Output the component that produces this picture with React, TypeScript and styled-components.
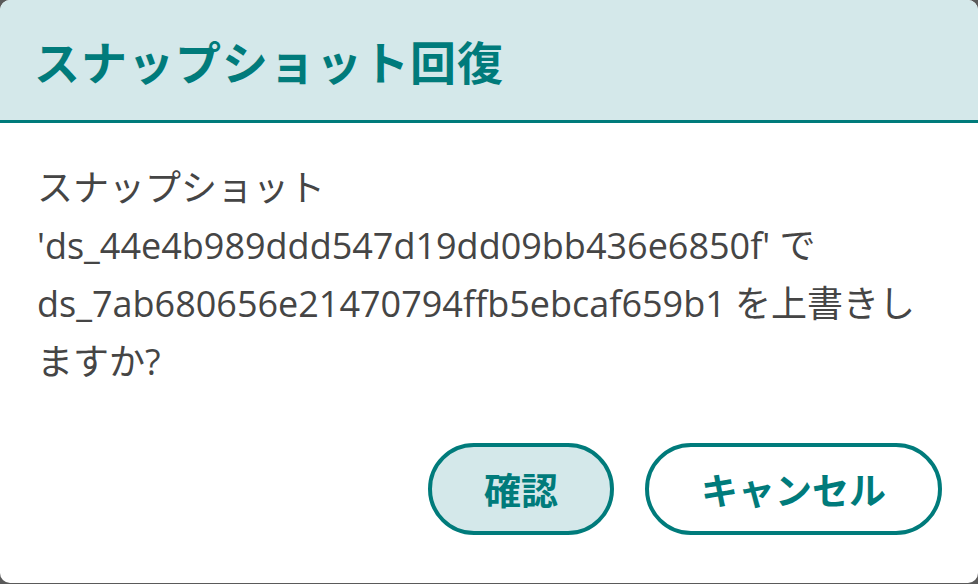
import React from "react";
import styled, { createGlobalStyle } from "styled-components";

const teal = "#007b7b";
const tint = "#d4e8ea";

const GlobalStyle = createGlobalStyle`
  html, body {
    margin: 0;
    padding: 0;
    background: #5a5a5a;
  }
  body {
    font-family: "Open Sans", "Noto Sans CJK JP", sans-serif;
  }
`;

const Dialog = styled.div`
  width: 978px;
  height: 583px;
  box-sizing: border-box;
  background: #ffffff;
  border-radius: 10px;
  overflow: hidden;
  display: flex;
  flex-direction: column;
`;

const Header = styled.header`
  height: 123px;
  flex: none;
  box-sizing: border-box;
  background: ${tint};
  border-bottom: 3px solid ${teal};
  display: flex;
  align-items: center;
  padding: 0 34px;
`;

const Title = styled.h2`
  margin: 0;
  font-family: "Noto Sans CJK JP", sans-serif;
  font-size: 46px;
  font-weight: 700;
  color: ${teal};
  letter-spacing: 1px;
`;

const Body = styled.div`
  padding: 36px 36px 0 37px;
  font-size: 36px;
  line-height: 58px;
  color: #454545;
`;

const Line = styled.div`
  white-space: nowrap;
`;

const Footer = styled.footer`
  margin-top: auto;
  display: flex;
  justify-content: flex-end;
  gap: 31px;
  padding: 0 36px 48px;
`;

const Button = styled.button<{ $primary?: boolean }>`
  height: 92px;
  box-sizing: border-box;
  padding: 0 52px;
  border: 4px solid ${teal};
  border-radius: 46px;
  background: ${(p) => (p.$primary ? tint : "#ffffff")};
  color: ${teal};
  font-family: "Noto Sans CJK JP", sans-serif;
  font-size: 37px;
  font-weight: 700;
  cursor: pointer;
`;

export default function App() {
  return (
    <>
      <GlobalStyle />
      <Dialog>
        <Header>
          <Title>スナップショット回復</Title>
        </Header>
        <Body>
          <Line>スナップショット</Line>
          <Line>'ds_44e4b989ddd547d19dd09bb436e6850f' で</Line>
          <Line>ds_7ab680656e21470794ffb5ebcaf659b1 を上書きし</Line>
          <Line>ますか?</Line>
        </Body>
        <Footer>
          <Button $primary>確認</Button>
          <Button>キャンセル</Button>
        </Footer>
      </Dialog>
    </>
  );
}
